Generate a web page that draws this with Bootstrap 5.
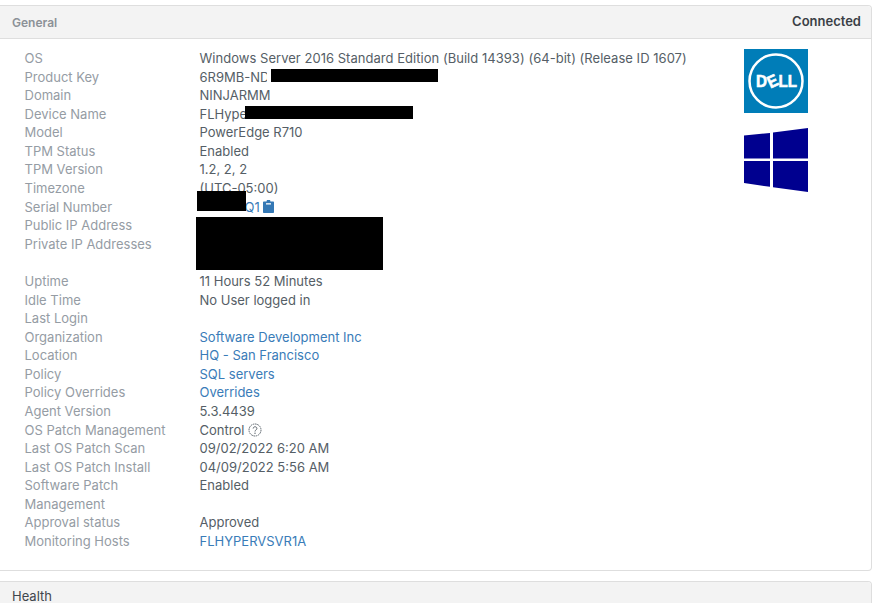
<!DOCTYPE html>
<html lang="en">
<head>
<meta charset="utf-8">
<title>General</title>
<link href="https://cdn.jsdelivr.net/npm/bootstrap@5.3.0/dist/css/bootstrap.min.css" rel="stylesheet">
<style>
html,body{height:603px;overflow:hidden}
body{font-family:Inter,"Liberation Sans",sans-serif;font-size:13px;line-height:18.571px;color:#555e66;background:#fff;padding:5px 3px 0 0}
.panel{border:1px solid #dedede;border-left:0;border-radius:0 4px 4px 0;margin-bottom:10px;background:#fff}
.panel-top{background:#f3f3f3;border-bottom:1px solid #dedede;height:33px;padding:0 10px 0 12px;font-weight:600;border-radius:0 4px 0 0}
.title-muted{color:#8c9197;font-size:12px;margin-top:2px}
.status-text{color:#3a3f46;font-size:13px;line-height:14px;margin-top:-3px}
.panel-main{height:531px;padding:10px 0 0 24.500px}
.info-list{width:719.500px;flex:none}
.info-label{width:175px;flex:none;color:#959ca4;padding-right:20px}
.info-value{flex:1;white-space:nowrap}
.os-value{letter-spacing:.03px}
.info-value a{color:#3a7cb8;text-decoration:none}
.two-line{height:37.142px}
.redact-wrap{position:relative}
.redact{position:absolute;background:#000}
.r-key{left:67px;top:1px;width:171px;height:13px;border-left:4px solid #fff}
.r-name{left:45.500px;top:1px;width:168px;height:13px}
.r-serial{left:-3px;top:-7px;width:49px;height:20px}
.r-ip{left:-4px;top:1px;width:187px;height:53px}
.serial-text{margin-left:45px}
.logos{width:64px;gap:15px}
.logos svg{display:block}
.clip{vertical-align:-1px;margin-left:3px}
.help{vertical-align:-2px}
.next-top{background:#f3f3f3;height:30px;padding:4px 0 0 12px;color:#3f464d;border-radius:0 4px 0 0;font-weight:400;line-height:20px}
</style>
</head>
<body>
<section class="panel">
  <div class="panel-top d-flex justify-content-between align-items-center">
    <span class="title-muted">General</span>
    <span class="status-text">Connected</span>
  </div>
  <div class="panel-main d-flex align-items-start">
    <div class="info-list">
      <div class="d-flex"><div class="info-label">OS</div><div class="info-value os-value">Windows Server 2016 Standard Edition (Build 14393) (64-bit) (Release ID 1607)</div></div>
      <div class="d-flex"><div class="info-label">Product Key</div><div class="info-value redact-wrap">6R9MB-ND<span class="redact r-key"></span></div></div>
      <div class="d-flex"><div class="info-label">Domain</div><div class="info-value">NINJARMM</div></div>
      <div class="d-flex"><div class="info-label">Device Name</div><div class="info-value redact-wrap">FLHype<span class="redact r-name"></span></div></div>
      <div class="d-flex"><div class="info-label">Model</div><div class="info-value">PowerEdge R710</div></div>
      <div class="d-flex"><div class="info-label">TPM Status</div><div class="info-value">Enabled</div></div>
      <div class="d-flex"><div class="info-label">TPM Version</div><div class="info-value">1.2, 2, 2</div></div>
      <div class="d-flex"><div class="info-label">Timezone</div><div class="info-value">(UTC-05:00)</div></div>
      <div class="d-flex"><div class="info-label">Serial Number</div><div class="info-value redact-wrap"><span class="redact r-serial"></span><a href="#" class="serial-text">Q1</a><svg class="clip" width="11" height="13" viewBox="0 0 11 13"><path fill="#3478b5" d="M1 1.500h2.600V1c0-.5.5-1 1-1h1.800c.5 0 1 .5 1 1v.5H10c.6 0 1 .4 1 1V12c0 .6-.4 1-1 1H1c-.6 0-1-.4-1-1V2.500c0-.6.4-1 1-1z"/><rect x="3" y="3.200" width="5" height="1.300" fill="#fff"/></svg></div></div>
      <div class="d-flex"><div class="info-label">Public IP Address</div><div class="info-value redact-wrap"><span class="redact r-ip"></span></div></div>
      <div class="d-flex two-line"><div class="info-label">Private IP Addresses</div><div class="info-value"></div></div>
      <div class="d-flex"><div class="info-label">Uptime</div><div class="info-value">11 Hours 52 Minutes</div></div>
      <div class="d-flex"><div class="info-label">Idle Time</div><div class="info-value">No User logged in</div></div>
      <div class="d-flex"><div class="info-label">Last Login</div><div class="info-value"></div></div>
      <div class="d-flex"><div class="info-label">Organization</div><div class="info-value"><a href="#">Software Development Inc</a></div></div>
      <div class="d-flex"><div class="info-label">Location</div><div class="info-value"><a href="#">HQ - San Francisco</a></div></div>
      <div class="d-flex"><div class="info-label">Policy</div><div class="info-value"><a href="#">SQL servers</a></div></div>
      <div class="d-flex"><div class="info-label">Policy Overrides</div><div class="info-value"><a href="#">Overrides</a></div></div>
      <div class="d-flex"><div class="info-label">Agent Version</div><div class="info-value">5.3.4439</div></div>
      <div class="d-flex"><div class="info-label">OS Patch Management</div><div class="info-value">Control <svg class="help" width="14" height="14" viewBox="0 0 14 14"><circle cx="7" cy="7" r="6" fill="none" stroke="#5a636b" stroke-width="1" stroke-dasharray="1.600 .7"/><path d="M5.200 5.500c0-2.300 3.700-2.300 3.700 0 0 1.500-1.900 1.400-1.900 3" fill="none" stroke="#5a636b" stroke-width="1"/><circle cx="7" cy="10.200" r=".7" fill="#5a636b"/></svg></div></div>
      <div class="d-flex"><div class="info-label">Last OS Patch Scan</div><div class="info-value">09/02/2022 6:20 AM</div></div>
      <div class="d-flex"><div class="info-label">Last OS Patch Install</div><div class="info-value">04/09/2022 5:56 AM</div></div>
      <div class="d-flex"><div class="info-label">Software Patch Management</div><div class="info-value">Enabled</div></div>
      <div class="d-flex"><div class="info-label">Approval status</div><div class="info-value">Approved</div></div>
      <div class="d-flex"><div class="info-label">Monitoring Hosts</div><div class="info-value"><a href="#">FLHYPERVSVR1A</a></div></div>
    </div>
    <div class="logos d-flex flex-column flex-shrink-0">
      <svg width="64" height="64" viewBox="0 0 64 64" role="img" aria-label="Dell">
        <rect width="64" height="64" fill="#007db8"/>
        <circle cx="32" cy="32" r="26.500" fill="none" stroke="#fff" stroke-width="2.500"/>
        <text x="12" y="38" font-family="Liberation Sans, sans-serif" font-weight="700" font-size="17" fill="#fff" stroke="#fff" stroke-width=".6" textLength="11" lengthAdjust="spacingAndGlyphs">D</text>
        <text x="23.500" y="38" font-family="Liberation Sans, sans-serif" font-weight="700" font-size="17" fill="#fff" stroke="#fff" stroke-width=".6" textLength="10" lengthAdjust="spacingAndGlyphs" transform="rotate(-25 28.500 32)">E</text>
        <text x="34.500" y="38" font-family="Liberation Sans, sans-serif" font-weight="700" font-size="17" fill="#fff" stroke="#fff" stroke-width=".6" textLength="18.500" lengthAdjust="spacingAndGlyphs">LL</text>
      </svg>
      <svg width="64" height="64" viewBox="0 0 64 64" role="img" aria-label="Windows">
        <path fill="#00008f" d="M0 7.500 26 5v25.500H0zM29 4.500 64 0v30.500H29zM0 33h26v25.800L0 55zM29 33h35v31l-35-4.800z"/>
      </svg>
    </div>
  </div>
</section>
<section class="panel">
  <div class="next-top">Health</div>
</section>
</body>
</html>
